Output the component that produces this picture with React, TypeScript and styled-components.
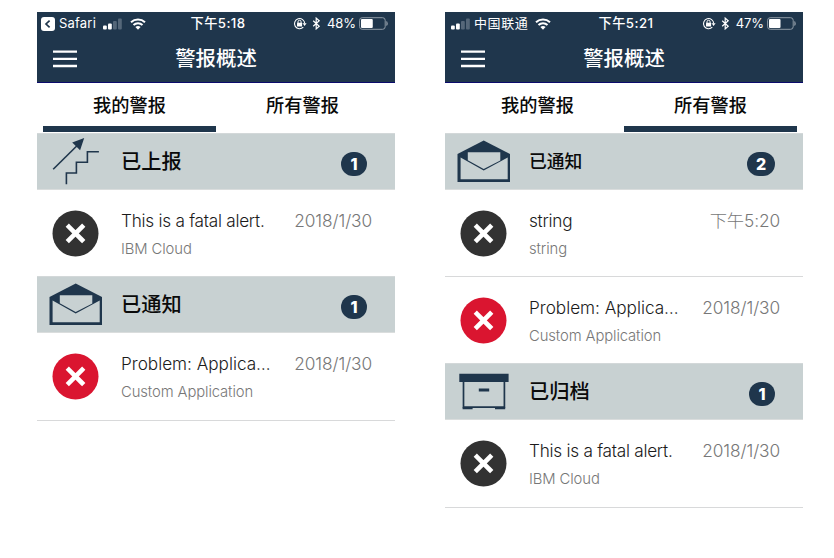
import React from 'react';
import styled, { createGlobalStyle } from 'styled-components';

const navy = '#1f364c';

const GlobalStyle = createGlobalStyle`
  *, *::before, *::after { box-sizing: border-box; }
  body { margin: 0; background: #fff; font-family: Inter, "Noto Sans CJK SC", sans-serif; }
`;

const Page = styled.main`
  display: flex;
  gap: 50px;
  width: 834px;
  height: 558px;
  padding: 12px 0 0 37px;
  overflow: hidden;
`;

const Phone = styled.section`
  width: 358px;
  flex: none;
`;

const Header = styled.header`
  height: 71px;
  background: ${navy};
  border-bottom: 1px solid #0b0b6c;
  color: #fff;
`;

const StatusBar = styled.div`
  display: grid;
  grid-template-columns: 150px 62px 146px;
  height: 23px;
  align-items: center;
  font-size: 13px;
  line-height: 23px;
  white-space: nowrap;
`;

const StatusLeft = styled.div<{ $pad: number }>`
  display: flex;
  align-items: center;
  padding-left: ${(p) => p.$pad}px;
`;

const Carrier = styled.span<{ $spacing: number }>`
  margin-left: 4px;
  margin-right: 7px;
  letter-spacing: ${(p) => p.$spacing}px;
`;

const Clock = styled.div`
  text-align: center;
  font-weight: 500;
  font-size: 13.2px;
  letter-spacing: 0.45px;
`;

const StatusRight = styled.div`
  display: flex;
  align-items: center;
  justify-content: flex-end;
  padding-right: 6px;
`;

const Gap = styled.span<{ $width: number }>`
  width: ${(p) => p.$width}px;
`;

const Percent = styled.span`
  margin: 0 3px 0 6px;
  letter-spacing: -0.05px;
`;

const NavBar = styled.div`
  display: grid;
  grid-template-columns: 56px 1fr 56px;
  align-items: center;
  height: 47px;
`;

const MenuIcon = styled.svg`
  margin-left: 16px;
`;

const Title = styled.h1`
  margin: 0;
  text-align: center;
  font-size: 20.4px;
  line-height: 48px;
  font-weight: 500;
`;

const Tabs = styled.nav`
  display: flex;
  height: 50px;
  padding: 0 6px;
`;

const Tab = styled.div<{ $active: boolean }>`
  width: 173px;
  height: 49px;
  border-bottom: 6px solid ${(p) => (p.$active ? navy : 'transparent')};
  text-align: center;
  color: #0a0a0a;
  font-size: 18.2px;
  line-height: 45px;
  font-weight: 500;
`;

const GroupHeader = styled.div`
  display: flex;
  height: 57px;
  background: #c8d1d2;
  border-top: 1px solid #d3d8d9;
  border-bottom: 1px solid #dadddd;
`;

const GroupIcon = styled.svg`
  flex: none;
  margin-top: -1px;
`;

const GroupTitle = styled.h2<{ $size: number }>`
  flex: 1;
  margin: 0;
  color: #0a0a0a;
  font-size: ${(p) => p.$size}px;
  line-height: 56px;
  font-weight: 500;
`;

const Badge = styled.span<{ $wide: boolean }>`
  width: ${(p) => (p.$wide ? 28 : 26)}px;
  height: 24px;
  margin: 18px 28px 0 0;
  border-radius: 12px;
  background: ${navy};
  color: #fff;
  font-size: 16px;
  line-height: 24px;
  font-weight: 800;
  text-align: center;
`;

const AlertRow = styled.article<{ $height: number; $divider: boolean }>`
  display: flex;
  height: ${(p) => p.$height}px;
  border-bottom: ${(p) => (p.$divider ? '1px solid #d8d9da' : 'none')};
`;

const SeverityIcon = styled.svg`
  flex: none;
  margin: 20px 22px 0 15px;
`;

const AlertText = styled.div`
  flex: 1;
  padding-top: 19px;
  white-space: nowrap;
`;

const AlertName = styled.div<{ $spacing: number }>`
  color: #1b1b1b;
  font-size: 17.2px;
  line-height: 24px;
  font-weight: 300;
  letter-spacing: ${(p) => p.$spacing}px;
`;

const AlertSource = styled.div`
  margin-top: 5px;
  color: #777;
  font-size: 14.8px;
  line-height: 22px;
  font-weight: 300;
  letter-spacing: -0.1px;
`;

const AlertTime = styled.time`
  padding: 19px 23px 0 0;
  color: #777;
  font-size: 17.3px;
  line-height: 24px;
  font-weight: 300;
  letter-spacing: -0.1px;
  white-space: nowrap;
`;

const BackChip = () => (
  <svg width="14" height="14" viewBox="0 0 14 14">
    <rect width="14" height="14" rx="3" fill="#fff" />
    <path d="M8.6 3.6 5 7l3.6 3.4" fill="none" stroke={navy} strokeWidth="1.7" />
  </svg>
);

const Signal = () => (
  <svg width="19" height="12" viewBox="0 0 19 12">
    <rect x="0" y="7.5" width="3.8" height="4" rx="1" fill="#fff" />
    <rect x="5" y="5.5" width="3.8" height="6" rx="1" fill="#fff" />
    <rect x="10" y="3" width="3.8" height="8.5" rx="1" fill="#556779" />
    <rect x="15" y="0.5" width="3.8" height="11" rx="1" fill="#556779" />
  </svg>
);

const Wifi = () => (
  <svg width="16" height="12" viewBox="0 0 16 12">
    <path d="M1 4.3a10.3 10.3 0 0 1 14 0M3.5 7a6.6 6.6 0 0 1 9 0" fill="none" stroke="#fff" strokeWidth="2" />
    <path d="M5.4 9.1a3.8 3.8 0 0 1 5.2 0L8 11.8Z" fill="#fff" />
  </svg>
);

const RotationLock = () => (
  <svg width="14" height="13" viewBox="0 0 14 13">
    <path d="M10.3 10.2A5.1 5.1 0 1 1 11.7 6.6" fill="none" stroke="#fff" strokeWidth="1.1" />
    <path d="M9.7 6.3h3.9l-2 2.6Z" fill="#fff" />
    <rect x="4" y="5.7" width="5.1" height="3.7" rx=".5" fill="#fff" />
    <path d="M5 6V4.8a1.55 1.55 0 0 1 3.1 0V6" fill="none" stroke="#fff" strokeWidth="1" />
  </svg>
);

const Bluetooth = () => (
  <svg width="9" height="13" viewBox="0 0 9 13">
    <path d="m1.2 3.7 6 5.5-3 2.7V1.1l3 2.7-6 5.5" fill="none" stroke="#fff" strokeWidth="1.2" />
  </svg>
);

const Battery = ({ level }: { level: number }) => (
  <svg width="30" height="13" viewBox="0 0 30 13">
    <rect x=".6" y=".7" width="25.6" height="11.6" rx="2.6" fill="none" stroke="#8f9ba6" />
    <rect x="2" y="2.1" width={level * 0.245} height="8.8" rx="1" fill="#fff" />
    <path d="M27.7 4.4q1.6 2.1 0 4.2Z" fill="#8f9ba6" stroke="#8f9ba6" strokeWidth=".6" />
  </svg>
);

type GroupKind = 'escalated' | 'notified' | 'archived';

const GroupGlyph = ({ kind }: { kind: GroupKind }) => (
  <GroupIcon width="84" height="56" viewBox="0 0 84 56">
    {kind === 'escalated' && (
      <g fill="none" stroke={navy} strokeWidth="1.6">
        <path d="M16.2 36.3 41 11.8" />
        <path d="m47.2 5-4.1 12.3-7.9-7.9Z" fill={navy} stroke="none" />
        <path d="M29.4 51.2V40h10V29.3h11V18.8h11.5" />
      </g>
    )}
    {kind === 'notified' && (
      <g>
        <path d="M12.5 21 38.7 7.5 65 21v28H12.5Z" fill={navy} />
        <path d="M22.8 19.3h32.5v8.3L38.7 36 22.8 27.3Z" fill="#c8d1d2" />
        <path d="m15.6 24.6 23.1 12.9 24-12.9v21.6H15.6Z" fill="#c8d1d2" />
      </g>
    )}
    {kind === 'archived' && (
      <g>
        <path d="M14.3 10.8h49.3v8.3H14.3Z" fill={navy} />
        <path d="M18.5 19v25.2h40.9V19" fill="none" stroke={navy} strokeWidth="1.7" />
        <path d="M17.6 44.3h10v2h-10ZM50 44.3h10.2v2H50ZM33.8 25.5h10.4v3H33.8Z" fill={navy} />
      </g>
    )}
  </GroupIcon>
);

type AlertItem = {
  name: string;
  source: string;
  time: string;
  spacing: number;
  height: number;
  critical?: boolean;
  divider?: boolean;
};

type AlertGroup = { kind: GroupKind; title: string; size?: number; items: AlertItem[] };

type Screen = {
  carrier: string;
  safari: boolean;
  clock: string;
  battery: number;
  activeTab: number;
  groups: AlertGroup[];
};

const fatal: AlertItem = {
  name: 'This is a fatal alert.',
  source: 'IBM Cloud',
  time: '2018/1/30',
  spacing: -0.26,
  height: 86,
};

const problem: AlertItem = {
  name: 'Problem: Applica…',
  source: 'Custom Application',
  time: '2018/1/30',
  spacing: -0.02,
  height: 86,
  critical: true,
};

const screens: Screen[] = [
  {
    carrier: 'Safari',
    safari: true,
    clock: '下午5:18',
    battery: 48,
    activeTab: 0,
    groups: [
      { kind: 'escalated', title: '已上报', items: [fatal] },
      { kind: 'notified', title: '已通知', items: [{ ...problem, height: 88, divider: true }] },
    ],
  },
  {
    carrier: '中国联通',
    safari: false,
    clock: '下午5:21',
    battery: 47,
    activeTab: 1,
    groups: [
      {
        kind: 'notified',
        title: '已通知',
        size: 17.8,
        items: [
          { name: 'string', source: 'string', time: '下午5:20', spacing: -0.26, height: 87, divider: true },
          problem,
        ],
      },
      { kind: 'archived', title: '已归档', items: [{ ...fatal, height: 88, divider: true }] },
    ],
  },
];

const AlertLine = ({ item }: { item: AlertItem }) => (
  <AlertRow $height={item.height} $divider={!!item.divider}>
    <SeverityIcon width="47" height="47" viewBox="0 0 47 47">
      <circle cx="23.5" cy="23.4" r="23" fill={item.critical ? '#da1530' : '#323232'} />
      <path d="m16.9 16.8 13.2 13.2M30.1 16.8 16.9 30" stroke="#fff" strokeWidth="4.6" strokeLinecap="square" />
    </SeverityIcon>
    <AlertText>
      <AlertName $spacing={item.spacing}>{item.name}</AlertName>
      <AlertSource>{item.source}</AlertSource>
    </AlertText>
    <AlertTime>{item.time}</AlertTime>
  </AlertRow>
);

const PhoneScreen = ({ screen }: { screen: Screen }) => (
  <Phone>
    <Header>
      <StatusBar>
        {screen.safari ? (
          <StatusLeft $pad={4}>
            <BackChip />
            <Carrier $spacing={0.2}>{screen.carrier}</Carrier>
            <Signal />
            <Gap $width={8} />
            <Wifi />
          </StatusLeft>
        ) : (
          <StatusLeft $pad={6}>
            <Signal />
            <Carrier $spacing={0.6}>{screen.carrier}</Carrier>
            <Wifi />
          </StatusLeft>
        )}
        <Clock>{screen.clock}</Clock>
        <StatusRight>
          <RotationLock />
          <Gap $width={5} />
          <Bluetooth />
          <Percent>{screen.battery}%</Percent>
          <Battery level={screen.battery} />
        </StatusRight>
      </StatusBar>
      <NavBar>
        <MenuIcon width="24" height="18" viewBox="0 0 24 18">
          <path d="M0 1.6h24M0 8.8h24M0 16h24" stroke="#fff" strokeWidth="2.3" />
        </MenuIcon>
        <Title>警报概述</Title>
      </NavBar>
    </Header>
    <Tabs>
      {['我的警报', '所有警报'].map((label, index) => (
        <Tab key={label} $active={index === screen.activeTab}>{label}</Tab>
      ))}
    </Tabs>
    {screen.groups.map((group) => (
      <React.Fragment key={group.kind}>
        <GroupHeader>
          <GroupGlyph kind={group.kind} />
          <GroupTitle $size={group.size ?? 20.2}>{group.title}</GroupTitle>
          <Badge $wide={group.items.length > 1}>{group.items.length}</Badge>
        </GroupHeader>
        {group.items.map((item) => (
          <AlertLine key={item.name} item={item} />
        ))}
      </React.Fragment>
    ))}
  </Phone>
);

export default function App() {
  return (
    <>
      <GlobalStyle />
      <Page>
        {screens.map((screen) => (
          <PhoneScreen key={screen.clock} screen={screen} />
        ))}
      </Page>
    </>
  );
}
